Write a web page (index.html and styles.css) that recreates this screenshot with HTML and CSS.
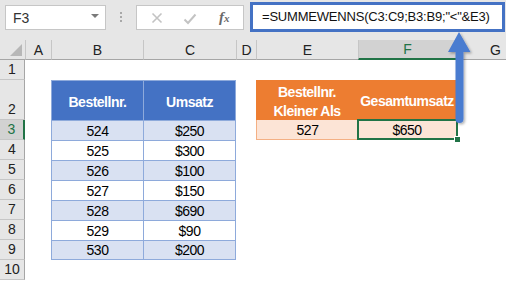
FILE: index.html
```html
<!DOCTYPE html>
<html>
<head>
<meta charset="utf-8">
<link rel="stylesheet" href="styles.css">
</head>
<body>
<div class="app">
  <div class="toolbar">
    <div class="namebox"><span class="ref">F3</span><span class="caret"></span></div>
    <div class="grip"><i></i><i></i><i></i></div>
    <div class="fxbox">
      <svg class="ico-x" width="12" height="12" viewBox="0 0 12 12"><path d="M1.5 1.5 L10.5 10.5 M10.5 1.5 L1.5 10.5" stroke="#c3c3c3" stroke-width="1.6" fill="none"/></svg>
      <svg class="ico-check" width="14" height="12" viewBox="0 0 14 12"><path d="M1.5 6.5 L5 10 L12.5 1.5" stroke="#c3c3c3" stroke-width="2" fill="none"/></svg>
      <span class="fx">f<span class="fx-x">x</span></span>
    </div>
    <div class="formula">=SUMMEWENNS(C3:C9;B3:B9;"&lt;"&amp;E3)</div>
  </div>

  <div class="sheet">
    <div class="corner"><span class="tri"></span></div>
    <div class="ch">A</div><div class="ch">B</div><div class="ch">C</div><div class="ch">D</div><div class="ch">E</div><div class="ch sel">F</div><div class="ch">G</div>

    <div class="rh">1</div><div></div><div></div><div></div><div></div><div></div><div></div><div></div>

    <div class="rh">2</div><div></div>
    <div class="th">Bestellnr.</div><div class="th last">Umsatz</div>
    <div></div>
    <div class="oh">Bestellnr.<br>Kleiner Als</div><div class="oh">Gesamtumsatz</div>
    <div></div>

    <div class="rh sel">3</div><div></div>
    <div class="tb band">524</div><div class="tb band last">$250</div>
    <div></div>
    <div class="ob">527</div><div class="ob active">$650</div>
    <div></div>

    <div class="rh">4</div><div></div>
    <div class="tb">525</div><div class="tb last">$300</div>
    <div></div><div></div><div></div><div></div>

    <div class="rh">5</div><div></div>
    <div class="tb band">526</div><div class="tb band last">$100</div>
    <div></div><div></div><div></div><div></div>

    <div class="rh">6</div><div></div>
    <div class="tb">527</div><div class="tb last">$150</div>
    <div></div><div></div><div></div><div></div>

    <div class="rh">7</div><div></div>
    <div class="tb band">528</div><div class="tb band last">$690</div>
    <div></div><div></div><div></div><div></div>

    <div class="rh">8</div><div></div>
    <div class="tb">529</div><div class="tb last">$90</div>
    <div></div><div></div><div></div><div></div>

    <div class="rh">9</div><div></div>
    <div class="tb band bottom">530</div><div class="tb band last bottom">$200</div>
    <div></div><div></div><div></div><div></div>

    <div class="rh">10</div><div></div><div></div><div></div><div></div><div></div><div></div><div></div>
  </div>

  <svg class="arrow" width="506" height="281" viewBox="0 0 506 281">
    <defs>
      <filter id="sh" x="-50%" y="-10%" width="200%" height="130%">
        <feDropShadow dx="1.5" dy="1.5" stdDeviation="1.2" flood-color="#000" flood-opacity="0.3"/>
      </filter>
    </defs>
    <path d="M459 32 L470.5 52 L463.5 52 L463.5 119 Q463.5 123 459.5 123 Q455.5 123 455.5 119 L455.5 52 L448 52 Z" fill="#4a7bd0" filter="url(#sh)"/>
  </svg>
</div>
</body>
</html>
```

FILE: styles.css
```css
* { box-sizing: border-box; }

body {
  margin: 0;
  width: 506px;
  height: 281px;
  overflow: hidden;
  background: #ffffff;
  font-family: "Liberation Sans", Arial, sans-serif;
  color: #000;
}

.app {
  position: relative;
  width: 506px;
  height: 281px;
  overflow: hidden;
}

/* ---------- toolbar ---------- */
.toolbar {
  display: flex;
  align-items: flex-start;
  height: 40px;
  background: #e6e6e6;
}

.namebox {
  margin: 5px 0 0 5px;
  width: 101px;
  height: 25px;
  background: #fff;
  border: 1px solid #c6c6c6;
  display: flex;
  align-items: center;
  justify-content: space-between;
  padding: 0 6px 0 7px;
}

.ref {
  font-size: 14px;
  color: #333;
}

.caret {
  width: 0;
  height: 0;
  border-left: 4px solid transparent;
  border-right: 4px solid transparent;
  border-top: 4px solid #7a7a7a;
  margin-top: -3px;
}

.grip {
  margin: 12px 0 0 14px;
  display: flex;
  flex-direction: column;
  gap: 2px;
}

.grip i {
  display: block;
  width: 2px;
  height: 2px;
  background: #a8a8a8;
}

.fxbox {
  margin: 5px 0 0 14px;
  width: 108px;
  height: 25px;
  background: #fff;
  border: 1px solid #c6c6c6;
  display: flex;
  align-items: center;
  padding-left: 14px;
}

.ico-x { margin-top: 1px; }
.ico-check { margin-left: 20px; margin-top: 2px; }

.fx {
  margin-left: 22px;
  font-family: "Liberation Serif", "Times New Roman", serif;
  font-style: italic;
  font-size: 15px;
  color: #6a6a6a;
  font-weight: bold;
}

.fx-x {
  font-size: 11px;
}

.formula {
  margin: 2px 0 0 6px;
  width: 255px;
  height: 30px;
  background: #fff;
  border: 3px solid #4472c4;
  font-size: 13px;
  letter-spacing: -0.2px;
  color: #111;
  display: flex;
  align-items: center;
  padding-left: 9px;
  padding-bottom: 1px;
  white-space: nowrap;
}

/* ---------- sheet ---------- */
.sheet {
  display: grid;
  grid-template-columns: 25px 26px 92px 93px 20px 102px 98px 78px;
  grid-template-rows: 20px 20px 40px repeat(8, 20px);
  width: 534px;
}

.corner {
  background: #e6e6e6;
  border-bottom: 1px solid #a6a6a6;
  position: relative;
}

.tri {
  position: absolute;
  right: 3px;
  bottom: 3px;
  width: 0;
  height: 0;
  border-left: 12px solid transparent;
  border-bottom: 12px solid #b7b7b7;
}

.ch {
  background: #e6e6e6;
  border-left: 1px solid #c6c6c6;
  border-bottom: 1px solid #a6a6a6;
  display: flex;
  align-items: center;
  justify-content: center;
  font-size: 14px;
  color: #222;
}

.ch.sel {
  background: #d2d2d2;
  color: #217346;
  border-bottom: 2px solid #217346;
}

.rh {
  background: #e6e6e6;
  border-right: 1px solid #a6a6a6;
  border-bottom: 1px solid #c6c6c6;
  display: flex;
  align-items: flex-end;
  justify-content: center;
  padding-bottom: 2px;
  font-size: 14px;
  color: #222;
}

.rh.sel {
  background: #d2d2d2;
  color: #217346;
  border-right: 2px solid #217346;
}

/* blue table */
.th,
.tb {
  display: flex;
  align-items: center;
  justify-content: center;
  font-size: 14px;
  letter-spacing: -0.5px;
  border-left: 1px solid #8eaadb;
  border-top: 1px solid #8eaadb;
}

.th {
  background: #4472c4;
  color: #fff;
  font-weight: bold;
  padding-top: 3px;
}

.tb { background: #fff; }
.tb.band { background: #d9e1f2; }
.last { border-right: 1px solid #8eaadb; }
.bottom { border-bottom: 1px solid #8eaadb; }

/* orange table */
.oh {
  background: #ed7d31;
  color: #fff;
  font-weight: bold;
  font-size: 14px;
  letter-spacing: -0.5px;
  line-height: 19px;
  display: flex;
  align-items: center;
  justify-content: center;
  text-align: center;
  padding-top: 3px;
}

.ob {
  background: #fce4d6;
  border-left: 1px solid #f4b084;
  border-bottom: 1px solid #f4b084;
  display: flex;
  align-items: center;
  justify-content: center;
  font-size: 14px;
  letter-spacing: -0.5px;
}

.ob.active {
  position: relative;
  border-left: none;
}

.ob.active::after {
  content: "";
  position: absolute;
  left: -1px;
  top: -1px;
  right: -2px;
  bottom: -1px;
  border: 2px solid #217346;
}

.ob.active::before {
  content: "";
  position: absolute;
  right: -5px;
  bottom: -4px;
  width: 5px;
  height: 5px;
  background: #217346;
  border: 1px solid #fff;
  z-index: 2;
}

/* overlay arrow */
.arrow {
  position: absolute;
  left: 0;
  top: 0;
  pointer-events: none;
}
```
